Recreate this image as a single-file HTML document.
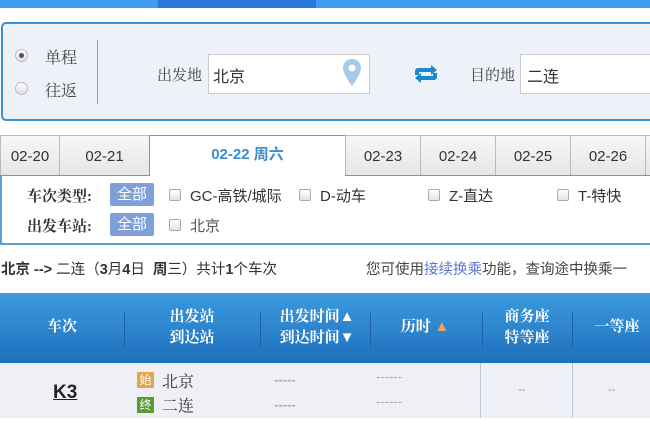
<!DOCTYPE html>
<html><head><meta charset="utf-8"><style>
*{margin:0;padding:0;box-sizing:border-box}
body{width:650px;height:433px;overflow:hidden;background:#fff;font-family:"Liberation Sans","Noto Sans CJK SC",sans-serif;position:relative;color:#333}
.a{position:absolute;white-space:nowrap}
.serif{font-family:"Liberation Serif","Noto Serif CJK SC",serif}
.rad{position:absolute;width:13px;height:13px;border-radius:50%;border:1px solid #bbb;background:linear-gradient(#fff,#ddd)}
.cb{position:absolute;width:12px;height:12px;border:1px solid #aaa;border-radius:2px;background:linear-gradient(#fff,#e4e4e4)}
.tab{position:absolute;top:135px;height:41px;border:1px solid #bbb;background:linear-gradient(#f7f7f7,#e6e6e6);font-size:15px;color:#333;text-align:center;line-height:42px}
.badge{position:absolute;width:44px;height:23px;background:#7f9fd8;color:#fff;font-size:15px;text-align:center;line-height:23px;border-radius:2px}
.th{position:absolute;color:#fff;font-size:15px;font-weight:bold;text-align:center;line-height:21px;font-family:"Liberation Serif","Noto Serif CJK SC",serif}
.sep{position:absolute;top:311px;width:1px;height:36px;background:#1e63a6}
.d{position:absolute;font-size:13px;color:#aaa;font-weight:bold;letter-spacing:0px}
</style></head><body>
<div class="a" style="left:0;top:0;width:650px;height:8px;background:#3e9cf2"></div>
<div class="a" style="left:158px;top:0;width:158px;height:8px;background:#2a77d9"></div>

<div class="a" style="left:1px;top:22px;width:660px;height:99px;border:2px solid #3c8fd0;border-radius:5px;background:#eef1f7"></div>
<div class="rad" style="left:15px;top:49px"><div style="position:absolute;left:3px;top:3px;width:5px;height:5px;border-radius:50%;background:#555"></div></div>
<div class="a serif" style="left:45px;top:45px;font-size:16px;color:#444">单程</div>
<div class="rad" style="left:15px;top:82px"></div>
<div class="a serif" style="left:45px;top:78px;font-size:16px;color:#444">往返</div>
<div class="a" style="left:97px;top:40px;width:1px;height:64px;background:#7aa9d4"></div>
<div class="a serif" style="left:157px;top:64px;font-size:15px;color:#444">出发地</div>
<div class="a" style="left:208px;top:54px;width:162px;height:40px;background:#fff;border:1px solid #ccc"></div>
<div class="a" style="left:213px;top:63px;font-size:16px;color:#333">北京</div>
<svg class="a" style="left:341px;top:58px" width="22" height="30" viewBox="0 0 22 30"><path d="M11 1C5.5 1 2 5 2 10c0 6 9 18 9 18s9-12 9-18c0-5-3.5-9-9-9z" fill="#a5c9e8"/><circle cx="11" cy="10" r="3.5" fill="#fff"/></svg>
<svg class="a" style="left:414px;top:65px" width="24" height="18" viewBox="0 0 24 18"><path d="M3 3h14V0l6 5-6 5V7H5v3H1V5z" fill="#1a8ad0"/><path d="M21 15H7v3l-6-5 6-5v3h12V8h4v5z" fill="#1a8ad0"/></svg>
<div class="a serif" style="left:470px;top:64px;font-size:15px;color:#444">目的地</div>
<div class="a" style="left:520px;top:54px;width:140px;height:40px;background:#fff;border:1px solid #ccc"></div>
<div class="a" style="left:527px;top:63px;font-size:16px;color:#333">二连</div>

<div class="tab" style="left:0;width:60px">02-20</div>
<div class="tab" style="left:59px;width:91px">02-21</div>
<div class="tab" style="left:149px;width:197px;background:#fff;border-color:#5aa0d8;border-bottom:none;color:#3a8ccc;font-weight:bold;line-height:38px">02-22 周六</div>
<div class="tab" style="left:345px;width:76px">02-23</div>
<div class="tab" style="left:420px;width:76px">02-24</div>
<div class="tab" style="left:495px;width:76px">02-25</div>
<div class="tab" style="left:570px;width:76px">02-26</div>
<div class="tab" style="left:645px;width:20px"></div>

<div class="a" style="left:0;top:175px;width:660px;height:70px;border:2px solid #5aa0d8;border-top:none"></div>
<div class="a" style="left:0;top:175px;width:150px;height:1px;background:#5aa0d8"></div>
<div class="a" style="left:345px;top:175px;width:310px;height:1px;background:#5aa0d8"></div>
<div class="a serif" style="left:27px;top:185px;font-size:15px;font-weight:bold;color:#333">车次类型:</div>
<div class="badge" style="left:110px;top:183px">全部</div>
<div class="cb" style="left:169px;top:189px"></div><div class="a" style="left:190px;top:185px;font-size:15px">GC-高铁/城际</div>
<div class="cb" style="left:299px;top:189px"></div><div class="a" style="left:320px;top:185px;font-size:15px">D-动车</div>
<div class="cb" style="left:428px;top:189px"></div><div class="a" style="left:449px;top:185px;font-size:15px">Z-直达</div>
<div class="cb" style="left:557px;top:189px"></div><div class="a" style="left:578px;top:185px;font-size:15px">T-特快</div>
<div class="a serif" style="left:27px;top:215px;font-size:15px;font-weight:bold;color:#333">出发车站:</div>
<div class="badge" style="left:110px;top:213px">全部</div>
<div class="cb" style="left:169px;top:219px"></div><div class="a" style="left:190px;top:215px;font-size:15px;color:#555">北京</div>

<div class="a" style="left:1px;top:258px;font-size:14.5px;color:#333"><b>北京 --&gt;</b> 二连（<b>3</b>月<b>4</b>日&nbsp; <b>周</b>三）共计<b>1</b>个车次</div>
<div class="a" style="left:366px;top:258px;font-size:14.5px;color:#444">您可使用<span style="color:#5a78d8">接续换乘</span>功能，查询途中换乘一</div>

<div class="a" style="left:0;top:293px;width:650px;height:70px;background:linear-gradient(#3c9ade,#1f70bd)"></div>
<div class="th" style="left:0;width:124px;top:317px">车次</div>
<div class="sep" style="left:124px"></div>
<div class="th" style="left:124px;width:136px;top:307px">出发站<br>到达站</div>
<div class="sep" style="left:260px"></div>
<div class="th" style="left:262px;width:110px;top:307px">出发时间▲<br>到达时间▼</div>
<div class="sep" style="left:370px"></div>
<div class="th" style="left:370px;width:110px;top:317px">历时 <span style="color:#f0a060">▲</span></div>
<div class="sep" style="left:482px"></div>
<div class="th" style="left:482px;width:90px;top:307px">商务座<br>特等座</div>
<div class="sep" style="left:572px"></div>
<div class="th" style="left:572px;width:90px;top:317px">一等座</div>

<div class="a" style="left:0;top:363px;width:650px;height:55px;background:#eef0f6"></div>
<div class="a" style="left:480px;top:363px;width:1px;height:55px;background:#b8c6d8"></div>
<div class="a" style="left:572px;top:363px;width:1px;height:55px;background:#b8c6d8"></div>
<div class="a" style="left:53px;top:382px;font-size:19px;font-weight:bold;color:#222;text-decoration:underline">K3</div>
<div class="a" style="left:137px;top:372px;width:17px;height:16px;background:#e0a650;color:#fff;font-size:12px;text-align:center;line-height:16px">始</div>
<div class="a serif" style="left:162px;top:369px;font-size:16px;color:#333">北京</div>
<div class="a" style="left:137px;top:397px;width:17px;height:16px;background:#5a9a30;color:#fff;font-size:12px;text-align:center;line-height:16px">终</div>
<div class="a serif" style="left:162px;top:393px;font-size:16px;color:#333">二连</div>
<div class="d" style="left:274px;top:372px">-----</div>
<div class="d" style="left:274px;top:397px">-----</div>
<div class="d" style="left:376px;top:369px;font-weight:normal">------</div>
<div class="d" style="left:376px;top:394px;font-weight:normal">------</div>
<div class="a" style="left:518px;top:384px;font-size:11px;color:#999">--</div>
<div class="a" style="left:608px;top:384px;font-size:11px;color:#999">--</div>
</body></html>
